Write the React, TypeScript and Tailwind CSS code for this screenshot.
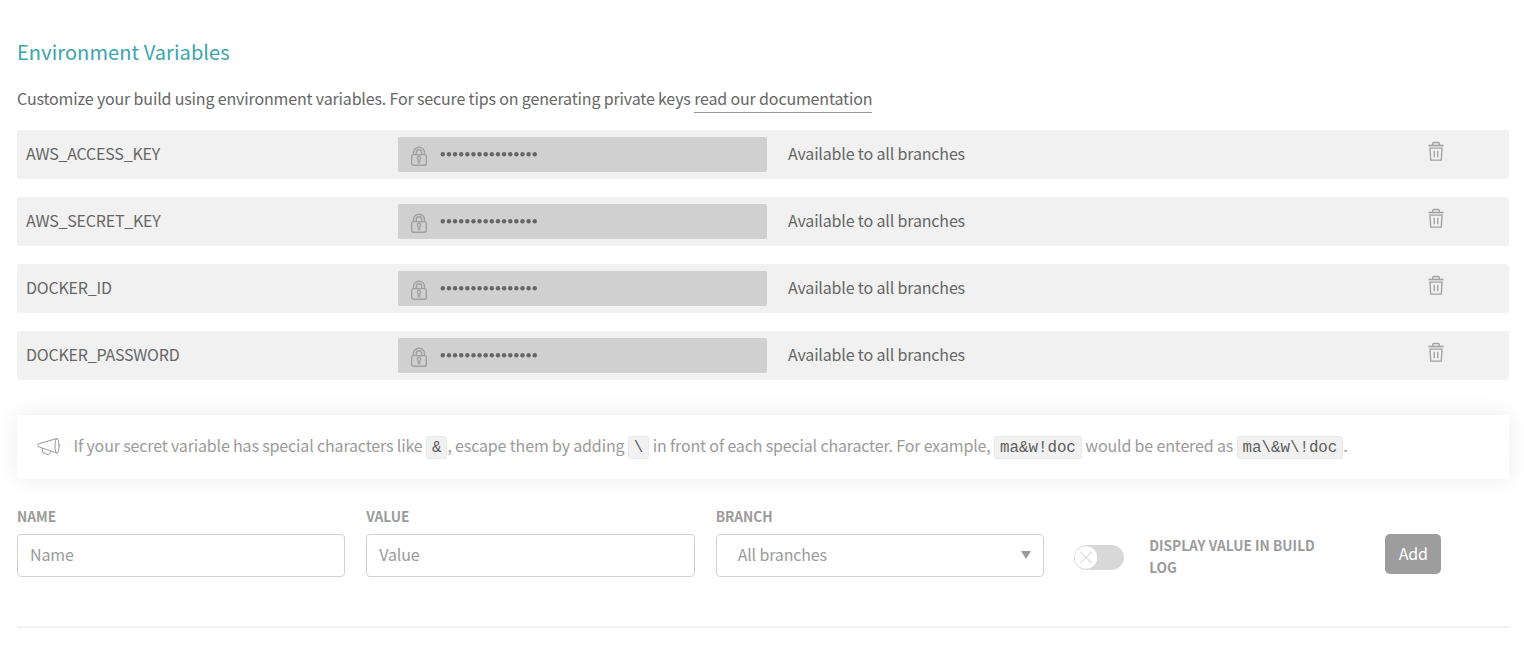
import type { ReactNode } from "react";

const variables = ["AWS_ACCESS_KEY", "AWS_SECRET_KEY", "DOCKER_ID", "DOCKER_PASSWORD"];

function LockIcon() {
  return (
    <svg className="h-5 w-4 shrink-0" viewBox="0 0 16 20" fill="none" stroke="#a0a0a0" strokeWidth="1.4">
      <rect x="0.7" y="8.6" width="14.6" height="10.6" rx="1.8" />
      <path d="M2.5 8.6V6.5a5.5 5.3 0 0 1 11 0v2.1M5.3 8.6V6.5a2.7 2.7 0 0 1 5.4 0v2.1z" />
      <path d="M7.2 13.4a1.6 1.6 0 1 1 1.6 0v2.8a.8.8 0 0 1-1.6 0z" strokeWidth="1.2" />
    </svg>
  );
}

function TrashIcon() {
  return (
    <svg className="h-5 w-4" viewBox="0 0 16 20" fill="none" stroke="#a3a3a3" strokeWidth="1.4">
      <path d="M0.5 4.5h15" strokeWidth="1.7" />
      <path d="M4.7 4V2.8c0-.8.5-1.3 1.3-1.3h4c.8 0 1.300.5 1.300 1.300V4" />
      <path d="M2 7.100h12l-.7 12H2.700z" />
      <path d="M6.200 9.800l.1 6.500M9.800 9.800l-.1 6.500" />
    </svg>
  );
}

function MegaphoneIcon() {
  return (
    <svg className="h-5 w-[23px] shrink-0" viewBox="0 0 23 20" fill="none" stroke="#999" strokeWidth="1" strokeLinejoin="round">
      <path d="M20 1.5L1.5 6.8c-.9.6-.9 2.4 0 3L20 16.1" />
      <ellipse cx="20" cy="8.8" rx="2" ry="7.4" />
      <path d="M22 7.5c.7.4.7 2 0 2.4M5.1 11.1l.7 4.3 5.3 2.4c1.2-.3 2.1-1.6 2.7-3.7" />
    </svg>
  );
}

function Code({ children }: { children: ReactNode }) {
  return (
    <code className="inline-flex h-[23px] items-start rounded-[3px] border border-[#e8e8e8] bg-[#f1f1f1] px-[5px] font-['Liberation_Mono',monospace] text-[15.8px] leading-[22px] tracking-normal text-[#5c5c5c]">
      {children}
    </code>
  );
}

function Field({ label, children }: { label: string; children: ReactNode }) {
  return (
    <label className="flex w-[328.2px] shrink-0 flex-col">
      <span className="h-[26px] text-[13.7px] font-bold leading-[16px] tracking-[0.03px]">{label}</span>
      {children}
    </label>
  );
}

export default function App() {
  return (
    <main className="h-[658px] w-full overflow-hidden bg-white pl-[17px] pr-[15px] font-['Noto_Sans_CJK_SC',sans-serif] text-[16px] tracking-[-0.155px] text-[#666]">
      <h1 className="pt-[36px] text-[20px] leading-[32px] tracking-[0.09px] text-[#3aa5ab]">Environment Variables</h1>
      <p className="mt-[17px] h-[45px] whitespace-nowrap leading-[26px]">
        Customize your build using environment variables. For secure tips on generating private keys{" "}
        <a className="inline-block h-[28px] border-b border-[#999]">read our documentation</a>
      </p>
      <ul className="flex flex-col gap-[18px]">
        {variables.map((name) => (
          <li key={name} className="flex h-[49px] items-center rounded-[3px] bg-[#f1f1f1] pl-[9px]">
            <span className="w-[372px] pb-[3px] tracking-[-0.22px]">{name}</span>
            <span className="flex h-[35px] w-[369px] items-center rounded-[2px] bg-[#d0d0d0] pl-[13px] pt-[3px]">
              <LockIcon />
              <svg className="mb-[5px] ml-[13px] h-2 w-[98px]" viewBox="0 0 98 8" fill="#666">
                {Array.from({ length: 16 }, (_, i) => (
                  <circle key={i} cx={2.8 + i * 6.13} cy="4.2" r="2.2" />
                ))}
              </svg>
            </span>
            <span className="ml-[21px] w-[640px] pb-[3px]">Available to all branches</span>
            <button aria-label="Delete" className="mb-[7px]">
              <TrashIcon />
            </button>
          </li>
        ))}
      </ul>
      <div className="mt-[35px] flex h-16 items-center whitespace-nowrap bg-white pl-5 text-[#9b9b9b] shadow-[0_0_25px_rgba(0,0,0,0.08)]">
        <MegaphoneIcon />
        <p className="mb-[4px] ml-[13.5px] leading-[26px]">
          If your secret variable has special characters like <Code>&amp;</Code>, escape them by adding <Code>\</Code> in
          front of each special character. For example, <Code>ma&amp;w!doc</Code> would be entered as{" "}
          <Code>ma\&amp;w\!doc</Code>.
        </p>
      </div>
      <form className="mt-[29px] flex h-[118px] gap-[21.15px] text-[#9b9b9b]">
        <Field label="NAME">
          <input placeholder="Name" className="h-[43px] rounded-[4px] border border-[#d2d2d2] px-3 pb-[3px] placeholder:text-[#9b9b9b]" />
        </Field>
        <Field label="VALUE">
          <input placeholder="Value" className="h-[43px] rounded-[4px] border border-[#d2d2d2] px-3 pb-[3px] placeholder:text-[#9b9b9b]" />
        </Field>
        <Field label="BRANCH">
          <span className="flex h-[43px] items-center justify-between rounded-[4px] border border-[#d2d2d2] pb-[3px] pl-[21px] pr-3">
            All branches
            <svg className="mt-px h-2 w-2.5" viewBox="0 0 10 8" fill="#9b9b9b">
              <path d="M0 0h10L5 8z" />
            </svg>
          </span>
        </Field>
        <div className="ml-[9px] mt-[37px] h-[25px] w-[50px] shrink-0 rounded-full bg-[#d8d8d8] p-px">
          <svg className="h-[23px] w-[23px]" viewBox="0 0 23 23" fill="none" stroke="#c8c8c8">
            <circle cx="11" cy="11.5" r="11.3" fill="#fff" stroke="none" />
            <path d="M5.5 6l11 11M16.5 6l-11 11" />
          </svg>
        </div>
        <p className="ml-1 mt-[26px] w-[200px] shrink-0 text-[13.7px] font-bold leading-[22px] tracking-[0.03px]">
          DISPLAY VALUE IN BUILD
          <br />
          LOG
        </p>
        <button type="button" className="ml-[15px] mt-[26px] h-10 w-14 shrink-0 rounded-[5px] bg-[#9d9d9d] pb-[2px] text-white">
          Add
        </button>
      </form>
      <hr className="border-t-2 border-[#f1f1f1]" />
    </main>
  );
}
